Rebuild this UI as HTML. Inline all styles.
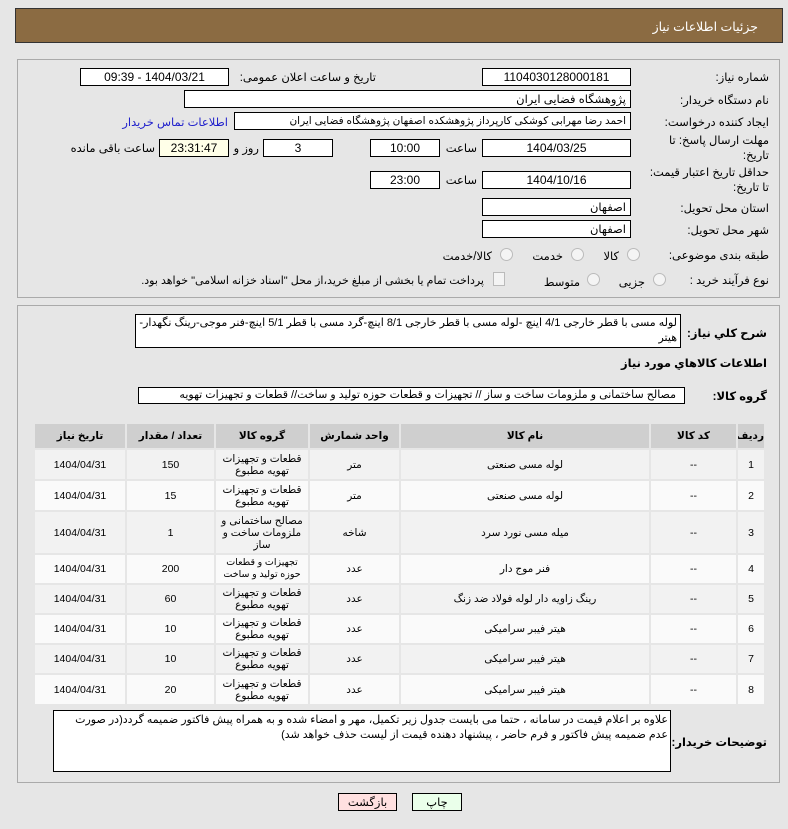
<!DOCTYPE html>
<html><head><meta charset="utf-8"><style>
*{box-sizing:border-box;margin:0;padding:0}
body{width:788px;height:829px;background:#e6e6e6;font-family:"Liberation Sans","DejaVu Sans",sans-serif;font-size:11px;color:#000;position:relative;overflow:hidden;direction:rtl}
.a{position:absolute;white-space:nowrap}
.box{position:absolute;border:1px solid #000;background:#fff;display:flex;align-items:center;justify-content:center;font-size:12px;overflow:hidden;white-space:nowrap}
.r{justify-content:flex-start;padding-right:4px}
.lab{position:absolute;white-space:nowrap;font-size:11.5px}
.panel{position:absolute;left:17px;width:763px;border:1px solid #aaa;background:#e6e6e6}
table{position:absolute;left:33px;top:422px;width:733px;border-collapse:collapse;direction:rtl;table-layout:fixed}
td,th{border:2px solid #e6e6e6;text-align:center;font-size:10.5px;line-height:12px;overflow:hidden;padding:0}
th{background:#cfcfcf;font-weight:bold;height:26px}
td{background:#f2f2f2}
tr.o td{background:#fafafa}
.rad{position:absolute;width:13px;height:13px;border-radius:50%;border:1px solid #bbb;background:#f4f4f4}
</style></head><body>
<div class="a" style="left:15px;top:8px;width:768px;height:35px;background:#8b6b42;border:1px solid #333"></div>
<div class="a" style="right:30px;top:19px;color:#fff;font-size:12.5px">جزئیات اطلاعات نیاز</div>

<div class="panel" style="top:59px;height:239px"></div>
<div class="panel" style="top:305px;height:478px"></div>

<div class="lab" style="right:19px;top:70px">شماره نیاز:</div>
<div class="box" style="left:482px;top:68px;width:149px;height:18px">1104030128000181</div>
<div class="lab" style="right:412px;top:70px">تاریخ و ساعت اعلان عمومی:</div>
<div class="box" style="left:80px;top:68px;width:149px;height:18px">1404/03/21 - 09:39</div>

<div class="lab" style="right:19px;top:93px">نام دستگاه خریدار:</div>
<div class="box r" style="left:184px;top:90px;width:447px;height:18px;font-size:11.5px">پژوهشگاه فضایی ایران</div>

<div class="lab" style="right:19px;top:115px">ایجاد کننده درخواست:</div>
<div class="box r" style="left:234px;top:112px;width:397px;height:18px;font-size:10.5px">احمد رضا مهرابی کوشکی کارپرداز پژوهشکده اصفهان پژوهشگاه فضایی ایران</div>
<div class="lab" style="right:560px;top:115px;color:#2222cc">اطلاعات تماس خریدار</div>

<div class="lab" style="right:19px;top:134px;line-height:15px;text-align:right">مهلت ارسال پاسخ: تا<br>تاریخ:</div>
<div class="box" style="left:482px;top:139px;width:149px;height:18px">1404/03/25</div>
<div class="lab" style="right:311px;top:141px">ساعت</div>
<div class="box" style="left:370px;top:139px;width:70px;height:18px">10:00</div>
<div class="box" style="left:263px;top:139px;width:70px;height:18px">3</div>
<div class="lab" style="right:529px;top:141px">روز و</div>
<div class="box" style="left:159px;top:139px;width:70px;height:18px;background:#ffffe8">23:31:47</div>
<div class="lab" style="right:633px;top:141px">ساعت باقی مانده</div>

<div class="lab" style="right:19px;top:166px;line-height:15px;text-align:right">حداقل تاریخ اعتبار قیمت:<br>تا تاریخ:</div>
<div class="box" style="left:482px;top:171px;width:149px;height:18px">1404/10/16</div>
<div class="lab" style="right:311px;top:173px">ساعت</div>
<div class="box" style="left:370px;top:171px;width:70px;height:18px">23:00</div>

<div class="lab" style="right:19px;top:201px">استان محل تحویل:</div>
<div class="box r" style="left:482px;top:198px;width:149px;height:18px;font-size:11.5px">اصفهان</div>
<div class="lab" style="right:19px;top:223px">شهر محل تحویل:</div>
<div class="box r" style="left:482px;top:220px;width:149px;height:18px;font-size:11.5px">اصفهان</div>

<div class="lab" style="right:19px;top:248px">طبقه بندی موضوعی:</div>
<div class="rad" style="left:627px;top:248px"></div><div class="lab" style="right:169px;top:249px">کالا</div>
<div class="rad" style="left:571px;top:248px"></div><div class="lab" style="right:225px;top:249px">خدمت</div>
<div class="rad" style="left:500px;top:248px"></div><div class="lab" style="right:296px;top:249px">کالا/خدمت</div>

<div class="lab" style="right:19px;top:273px">نوع فرآیند خرید :</div>
<div class="rad" style="left:653px;top:273px"></div><div class="lab" style="right:143px;top:275px">جزیی</div>
<div class="rad" style="left:587px;top:273px"></div><div class="lab" style="right:208px;top:275px">متوسط</div>
<div class="a" style="left:493px;top:272px;width:12px;height:14px;border:1px solid #bbb;background:#f4f4f4"></div>
<div class="lab" style="right:304px;top:274px;font-size:11px">پرداخت تمام یا بخشی از مبلغ خرید،از محل "اسناد خزانه اسلامی" خواهد بود.</div>

<div class="lab" style="right:21px;top:326px;font-weight:bold">شرح کلي نياز:</div>
<div class="a" style="left:135px;top:314px;width:546px;height:34px;border:1px solid #000;background:#fff;white-space:normal;padding:1px 3px;font-size:11px;line-height:15px;text-align:right;overflow:hidden">لوله مسی با قطر خارجی 4/1 اینچ -لوله مسی با قطر خارجی 8/1 اینچ-گرد مسی با قطر 5/1 اینچ-فنر موجی-رینگ نگهدار-هیتر</div>
<div class="lab" style="right:21px;top:356px;font-weight:bold">اطلاعات کالاهاي مورد نياز</div>
<div class="lab" style="right:21px;top:389px;font-weight:bold">گروه کالا:</div>
<div class="a" style="left:138px;top:387px;width:547px;height:17px;border:1px solid #000;background:#fff;overflow:hidden;padding-right:8px;font-size:11px;line-height:15px">مصالح ساختمانی و ملزومات ساخت و ساز // تجهیزات و قطعات حوزه تولید و ساخت//  قطعات و تجهیزات تهویه</div>

<table>
<colgroup><col style="width:28px"><col style="width:87px"><col style="width:250px"><col style="width:91px"><col style="width:94px"><col style="width:89px"><col></colgroup>
<tr><th>ردیف</th><th>کد کالا</th><th>نام کالا</th><th>واحد شمارش</th><th>گروه کالا</th><th>تعداد / مقدار</th><th>تاریخ نیاز</th></tr>
<tr style="height:31px"><td>1</td><td>--</td><td>لوله مسی صنعتی</td><td>متر</td><td>قطعات و تجهیزات تهویه مطبوع</td><td>150</td><td>1404/04/31</td></tr>
<tr class="o" style="height:31px"><td>2</td><td>--</td><td>لوله مسی صنعتی</td><td>متر</td><td>قطعات و تجهیزات تهویه مطبوع</td><td>15</td><td>1404/04/31</td></tr>
<tr style="height:43px"><td>3</td><td>--</td><td>میله مسی نورد سرد</td><td>شاخه</td><td>مصالح ساختمانی و ملزومات ساخت و ساز</td><td>1</td><td>1404/04/31</td></tr>
<tr class="o" style="height:30px"><td>4</td><td>--</td><td>فنر موج دار</td><td>عدد</td><td style="font-size:9.5px">تجهیزات و قطعات حوزه تولید و ساخت</td><td>200</td><td>1404/04/31</td></tr>
<tr style="height:30px"><td>5</td><td>--</td><td>رینگ زاویه دار لوله فولاد ضد زنگ</td><td>عدد</td><td>قطعات و تجهیزات تهویه مطبوع</td><td>60</td><td>1404/04/31</td></tr>
<tr class="o" style="height:30px"><td>6</td><td>--</td><td>هیتر فیبر سرامیکی</td><td>عدد</td><td>قطعات و تجهیزات تهویه مطبوع</td><td>10</td><td>1404/04/31</td></tr>
<tr style="height:30px"><td>7</td><td>--</td><td>هیتر فیبر سرامیکی</td><td>عدد</td><td>قطعات و تجهیزات تهویه مطبوع</td><td>10</td><td>1404/04/31</td></tr>
<tr class="o" style="height:31px"><td>8</td><td>--</td><td>هیتر فیبر سرامیکی</td><td>عدد</td><td>قطعات و تجهیزات تهویه مطبوع</td><td>20</td><td>1404/04/31</td></tr>
</table>

<div class="lab" style="right:21px;top:735px;font-weight:bold">توضیحات خریدار:</div>
<div class="a" style="left:53px;top:710px;width:618px;height:62px;border:1px solid #000;background:#fff;white-space:normal;padding:2px 2px;font-size:11px;line-height:15px;text-align:right">علاوه بر اعلام قیمت در سامانه ، حتما می بایست جدول زیر تکمیل، مهر و امضاء شده و به همراه پیش فاکتور ضمیمه گردد(در صورت عدم ضمیمه پیش فاکتور و فرم حاضر ، پیشنهاد دهنده قیمت از لیست حذف خواهد شد)</div>

<div class="box" style="left:412px;top:793px;width:50px;height:18px;background:#eaffea;font-size:11.5px">چاپ</div>
<div class="box" style="left:338px;top:793px;width:59px;height:18px;background:#ffe0e0;font-size:11.5px">بازگشت</div>
</body></html>
